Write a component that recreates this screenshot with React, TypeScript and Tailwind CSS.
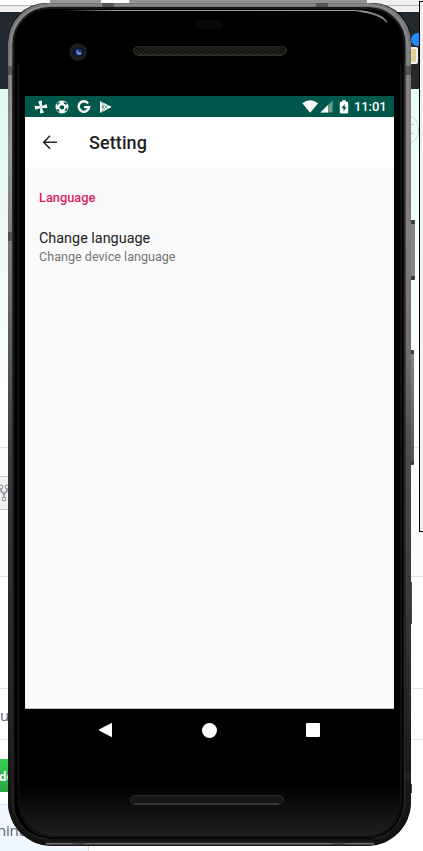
import React from "react";

function Backdrop() {
  return (
    <div className="flex h-[851px] w-full flex-col bg-white font-['Open_Sans',sans-serif]">
      <div className="flex h-[5px] shrink-0">
        <div className="w-[50px]" />
        <div className="w-[51px] bg-[#999]" />
        <div className="w-[29px] border-r border-[#aaa]" />
        <div className="w-[237px] bg-[#8d9390]" />
        <div className="flex-1 bg-[#f0f0f0]" />
      </div>
      <div className="h-[7px] shrink-0 border-t border-[#b5b5b5] bg-[#f0f0f0]" />
      <div className="h-[77px] shrink-0 bg-[#24292e]" />
      <div className="flex h-[358px] shrink-0 justify-between">
        <div className="w-2 bg-linear-to-b from-[#e1f7f3] to-white" />
        <div className="w-5 bg-linear-to-b from-[#e6fff0] to-white" />
      </div>
      <div className="h-[130px] shrink-0 border-y border-[#e1e4e8] bg-[#fafbfc] pt-[28px]">
        <div className="h-[34px] w-6 border-y border-[#c9ccd0] bg-[#eff1f3] pt-[7px]">
          <svg width="11" height="18" viewBox="0 0 11 18" fill="none" stroke="#999fa5" strokeWidth="1.2">
            <circle cx="1" cy="3" r="1.8" />
            <circle cx="7" cy="3" r="1.8" />
            <circle cx="4" cy="15" r="1.8" />
            <path d="M1 5v2l3 3v3M7 5v2l-3 3" strokeWidth="1.8" />
          </svg>
        </div>
      </div>
      <div className="h-[112px] shrink-0 border-b border-[#e1e4e8]" />
      <div className="h-[51px] shrink-0 border-b border-[#e1e4e8] pt-[15px] text-[15px] leading-[22px] text-[#5c6085]">u</div>
      <div className="h-[19px] shrink-0" />
      <div className="h-[33px] w-6 shrink-0 bg-linear-to-b from-[#34d058] to-[#28a745] pt-[9px] text-[12px] leading-[17px] font-bold text-white">
        <div className="-ml-[1px]">de</div>
      </div>
      <div className="h-[12px] shrink-0" />
      <div className="h-[48px] w-[89px] shrink-0 border-t border-r border-[#c8e1ff] bg-[#f1f8ff] pt-[14px] text-[15px] leading-[22px] text-[#5c6578]">
        <div className="-ml-[3px] tracking-[-0.2px]">hint</div>
      </div>
    </div>
  );
}

function SideWindow() {
  return (
    <>
      <div className="absolute top-[33px] left-[411px] h-[13px] w-[13px] rounded-full bg-[#2188ff]" />
      <div className="absolute top-[47px] left-[408px] h-[17px] w-[10px] rounded-[2px] border-2 border-[#f1f1f1] bg-[#e2d295]" />
      <div className="absolute top-[114px] left-[391px] h-[31px] w-[28px] rounded-full border border-[#c8d9ce]">
        <div className="mt-[9px] ml-[20px] h-[10px] w-[1px] border-y border-[#6c8175]" />
      </div>
      <div className="absolute top-[1px] left-[419px] h-[531px] w-[6px] border border-black bg-[#f0f0f0]" />
    </>
  );
}

function Speaker({ dim }: { dim?: boolean }) {
  const id = dim ? "mesh-low" : "mesh-top";
  return (
    <svg width="154" height="10" viewBox="0 0 154 10">
      <defs>
        <pattern id={id} width="4" height="4" patternUnits="userSpaceOnUse">
          <rect width="4" height="4" fill="#141310" />
          <path d="M0 0L2 2L0 4M4 0L2 2L4 4" stroke={dim ? "#24211f" : "#28251f"} strokeWidth="0.7" fill="none" />
        </pattern>
      </defs>
      <rect x="0.5" y="0.7" width="153" height="8.4" rx="4.2" fill={`url(#${id})`} stroke={dim ? "#303030" : "#302e2b"} />
      <path d="M5 9.1H149" stroke={dim ? "#555" : "#464340"} strokeWidth="0.8" />
    </svg>
  );
}

function StatusBar() {
  return (
    <div className="flex h-[21px] shrink-0 items-center bg-[#00574b] text-white">
      <div className="flex flex-1 items-center pl-[9px]">
        <svg width="14" height="14" viewBox="0 0 14 14" fill="white">
          <path d="M4.2 1.2L7.9 .6V6.6H6.1ZM12.8 4.2L13.4 7.9H7.4V6.1ZM9.8 12.8L6.1 13.4V7.4H7.9ZM1.2 9.8L.6 6.1H6.6V7.9Z" />
        </svg>
        <svg className="ml-[7px]" width="14" height="14" viewBox="0 0 14 14">
          <circle cx="7" cy="7" r="6.5" fill="white" />
          <path d="M6 5.2L9.1 5.8L8.9 8.9L6 9.6L4.2 7.2ZM2.2 3.3L4.7 1.8L4.3 4L1.9 5.5ZM8.4 1.6L12 3.2L11.2 5L9.2 4ZM1.4 9.4L3.5 9L4.8 11.5L2.8 11.5ZM10.6 8.8L12.6 7.6L11.8 10.6L9.4 11.6Z" fill="#00574b" />
        </svg>
        <svg className="ml-[8px]" width="14" height="14" viewBox="0 0 14 14" fill="none" stroke="white" strokeWidth="2.4">
          <path d="M11.1 3.4A5.2 5.2 0 1 0 12.1 7.1H7.1" />
        </svg>
        <svg className="ml-[8px]" width="14" height="14" viewBox="0 0 14 14">
          <path d="M1 1L12.8 7L1 13Z" fill="white" />
          <path d="M2 1.5L8.8 8.8M2 12.5L8.8 5.2" stroke="#00574b" strokeWidth=".6" />
          <path d="M2.8 4.2L5.4 7L2.8 9.8Z" fill="#00574b" opacity=".6" />
        </svg>
      </div>
      <svg width="17" height="13" viewBox="0 0 17 13">
        <path d="M0.3 3.2Q8.2-2.6 16.1 3.2L8.2 12.7Z" fill="white" />
      </svg>
      <svg className="ml-[1px]" width="13" height="13" viewBox="0 0 13 13">
        <path d="M12.6.6V12.4H.5Z" fill="white" opacity=".4" />
        <path d="M8 5.1V12.4H.5Z" fill="white" />
      </svg>
      <svg className="ml-[6px]" width="10" height="14" viewBox="0 0 10 14">
        <path d="M1.5 1.7H3.2V.3H6.8V1.7H8.5Q9.2 1.7 9.2 2.4V12.8Q9.2 13.5 8.5 13.5H1.5Q.8 13.5.8 12.8V2.4Q.8 1.7 1.5 1.7Z" fill="white" />
        <path d="M5.7 3.7L2.6 8.2H4.5V11.5L7.5 7H5.7Z" fill="#00574b" />
      </svg>
      <span className="mr-[8px] ml-[5px] w-[32px] pt-px text-[13px] leading-[20px] font-medium tracking-[-0.1px] whitespace-nowrap">11:01</span>
    </div>
  );
}

function SettingScreen() {
  return (
    <main className="ml-[17px] flex h-[613px] w-[369px] shrink-0 flex-col border-b border-[#b5c5c1] bg-[#fafafa] font-[Roboto,sans-serif]">
      <StatusBar />
      <header className="flex h-[50px] shrink-0 items-center bg-white pl-[17px] text-[#212121]">
        <svg width="16" height="16" viewBox="0 0 16 16" fill="none" stroke="currentColor" strokeWidth="1.5">
          <path d="M15 8.3H1.8M8 1.8L1.7 8.3L8 14.8" />
        </svg>
        <h1 className="ml-[31px] pt-[2px] text-[18px] leading-[24px] font-medium tracking-[0.1px]">Setting</h1>
      </header>
      <section className="px-[14px] pt-[22px]">
        <h2 className="text-[12.8px] leading-[18px] font-medium text-[#d81b60]">Language</h2>
        <div className="mt-[22px]">
          <div className="text-[14.4px] leading-[20px] text-[#212121]">Change language</div>
          <div className="-mt-px text-[12.6px] leading-[17px] text-[#757575]">Change device language</div>
        </div>
      </section>
    </main>
  );
}

function NavBar() {
  return (
    <nav className="ml-[17px] flex h-[42px] w-[369px] shrink-0 items-center justify-between pr-[74px] pl-[73px]">
      <svg width="15" height="16" viewBox="0 0 15 16" fill="white">
        <path d="M14 .8V15.2L1.4 8.7Q.4 8 1.4 7.3Z" />
      </svg>
      <div className="h-[15px] w-[15px] rounded-full bg-white" />
      <div className="h-[14px] w-[14px] rounded-[1px] bg-white" />
    </nav>
  );
}

function Phone() {
  return (
    <div className="absolute top-[3px] left-[8px] h-[843px] w-[403px]">
      <div className="absolute top-[217px] left-[400px] h-[60px] w-[7px] rounded-r-[1px] border-y-4 border-[#3d3d3d] bg-[#858585]" />
      <div className="absolute top-[347px] left-[400px] h-[115px] w-[6px] rounded-r-[1px] border-y-4 border-[#3b3b3b] bg-linear-to-b from-[#858585] to-[#555]" />
      <div className="absolute top-[579px] left-[400px] h-[42px] w-[4px] bg-[#4c4c4c]" />
      <div className="absolute top-[781px] left-[400px] h-[9px] w-[4px] bg-[#484848]" />
      <div className="relative flex h-[843px] flex-col overflow-hidden rounded-t-[38px] rounded-b-[44px] bg-black">
        <svg className="absolute inset-0" width="403" height="843" viewBox="0 0 403 843" fill="none">
          <defs>
            <linearGradient id="edge" x1="0" y1="0" x2="0" y2="843" gradientUnits="userSpaceOnUse">
              <stop stopColor="#777" />
              <stop offset=".28" stopColor="#7f7b7b" />
              <stop offset=".43" stopColor="#6f6b6b" />
              <stop offset=".52" stopColor="#504d4d" />
              <stop offset=".75" stopColor="#343434" />
              <stop offset=".9" stopColor="#1b1b1b" />
              <stop offset="1" stopColor="#111" />
            </linearGradient>
            <linearGradient id="edgeLeft" x1="0" y1="0" x2="0" y2="843" gradientUnits="userSpaceOnUse">
              <stop stopColor="#666" />
              <stop offset=".17" stopColor="#929292" />
              <stop offset=".35" stopColor="#686868" />
              <stop offset=".55" stopColor="#393939" />
              <stop offset=".8" stopColor="#252525" />
              <stop offset="1" stopColor="#111" />
            </linearGradient>
            <linearGradient id="chin" x1="0" y1="780" x2="0" y2="835" gradientUnits="userSpaceOnUse">
              <stop stopColor="#000" />
              <stop offset="1" stopColor="#202020" />
            </linearGradient>
            <linearGradient id="shine" x1="55" y1="0" x2="383" y2="0" gradientUnits="userSpaceOnUse">
              <stop stopColor="#8b9999" stopOpacity="0" />
              <stop offset=".15" stopColor="#8b9999" />
              <stop offset=".9" stopColor="#9ca6a6" />
              <stop offset="1" stopColor="#777" />
            </linearGradient>
            <linearGradient id="rimLight" x1="0" y1="0" x2="0" y2="400" gradientUnits="userSpaceOnUse">
              <stop stopColor="#aaa" stopOpacity=".6" />
              <stop offset=".3" stopColor="#aaa" stopOpacity=".45" />
              <stop offset="1" stopColor="#888" stopOpacity="0" />
            </linearGradient>
          </defs>
          <rect width="403" height="843" rx="40" fill="url(#edge)" />
          <rect y="40" width="12" height="803" fill="url(#edgeLeft)" />
          <path d="M2.5 400V42Q5 6 42 2H362Q396 5 400 42V400" stroke="url(#rimLight)" />
          <rect x="5.5" y="5" width="391" height="832" rx="36" fill="black" stroke="#171717" strokeWidth="2" />
          <path d="M10 765H394V798Q391 832 360 835H45Q12 832 10 798Z" fill="url(#chin)" />
          <path d="M10.5 60V792Q11 829 43 834H360Q392 831 393 792V60" stroke="#101010" strokeWidth="2" />
          <path d="M4.5 65V797Q7 831 39 836M396.5 60V797Q394 831 364 836" stroke="#292929" />
          <path d="M55 7.5H345Q365 8 374 14Q378 17 379 19Q371 11 350 8" stroke="url(#shine)" strokeWidth="1.1" />
          <path d="M35 838H365" stroke="#151515" strokeWidth="3" />
          <path d="M38 840.7H366" stroke="#656565" strokeWidth="2" />
          <path d="M0 63h6v9H0zM0 229h6v9H0zM397 63h6v9h-6zM94 0h12v4H94zM308 0h12v4h-12zM65 839h12v4H65zM325 839h12v4h-12zM397 770h6v9h-6z" fill="#292929" fillOpacity=".5" />
          <rect x="188" y="17" width="27" height="9" rx="4.5" fill="#08090d" />
        </svg>
        <div className="relative flex h-[93px] shrink-0">
          <svg className="mt-[39px] ml-[60px]" width="20" height="20" viewBox="0 0 20 20">
            <circle cx="10" cy="10" r="8.7" fill="#1d1d1f" />
            <circle cx="10" cy="10" r="5.5" fill="#10152f" />
            <circle cx="10.5" cy="10" r="3.2" fill="#263675" />
            <path d="M8 8l2 1 2 3-2 1z" fill="#6e8fe2" />
            <circle cx="12.2" cy="11.4" r="1" fill="#a2b5ed" />
          </svg>
          <div className="mt-[43px] ml-[45px]"><Speaker /></div>
        </div>
        <div className="relative flex flex-col">
          <SettingScreen />
          <NavBar />
          <div className="mt-[44px] ml-[122px] h-[10px]"><Speaker dim /></div>
        </div>
      </div>
    </div>
  );
}

export default function App() {
  return (
    <div className="relative h-[851px] w-[423px] overflow-hidden">
      <Backdrop />
      <SideWindow />
      <Phone />
    </div>
  );
}
